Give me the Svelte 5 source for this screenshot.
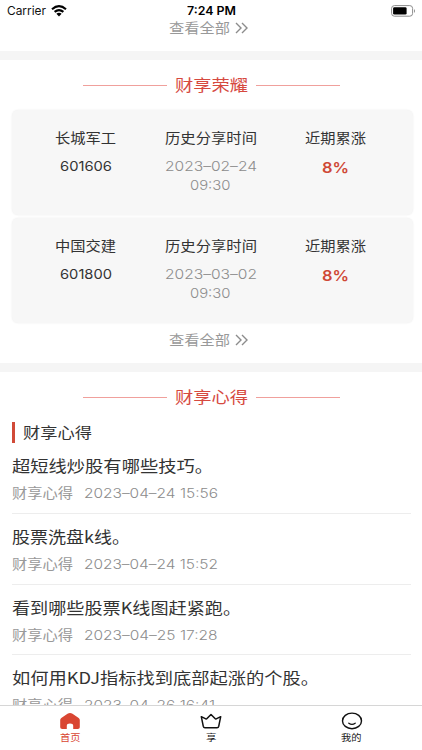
<script>
  const honours = [
    { name: '长城军工', code: '601606', date: '2023–02–24', time: '09:30', rise: '8%' },
    { name: '中国交建', code: '601800', date: '2023–03–02', time: '09:30', rise: '8%' },
  ];
  const articles = [
    { title: '超短线炒股有哪些技巧。', width: 201, time: '2023–04–24 15:56', timeWidth: 134 },
    { title: '股票洗盘k线。', width: 118, time: '2023–04–24 15:52', timeWidth: 134 },
    { title: '看到哪些股票K线图赶紧跑。', width: 229, time: '2023–04–25 17:28', timeWidth: 133.5 },
    { title: '如何用KDJ指标找到底部起涨的个股。', width: 307, time: '2023–04–26 16:41', timeWidth: 131 },
  ];

  // Extends the lettering horizontally until it fills the given width.
  function extend(node, width) {
    node.style.transform = `scaleX(${width / node.getBoundingClientRect().width})`;
  }
</script>

{#snippet wide(text, width, kind)}
  <span class="wide {kind}" style="width:{width}px"><span use:extend={width}>{text}</span></span>
{/snippet}

{#snippet more()}
  <div class="more">
    {@render wide('查看全部', 61, 'label')}
    <svg width="13" height="12" viewBox="0 0 13 12"><path d="M1 1l5 5-5 5M7 1l5 5-5 5" fill="none" stroke="#8c8c8c" stroke-width="1.4" /></svg>
  </div>
{/snippet}

{#snippet heading(text)}
  <div class="heading"><div class="rule"></div>{@render wide(text, 73, 'head')}<div class="rule"></div></div>
{/snippet}

<div class="screen">
  <header>
    <div class="carrier">
      {@render wide('Carrier', 39, 'status')}
      <svg width="16" height="12" viewBox="0 0 16 12">
        <path d="M1 4.2Q8-2 15 4.2M3.6 6.9Q8 3.2 12.4 6.9" fill="none" stroke="#000" stroke-width="2.1" />
        <path d="M5.4 8.7Q8 6.8 10.6 8.7L8 11.4Z" />
      </svg>
    </div>
    {@render wide('7:24 PM', 49, 'clock')}
    <svg class="battery" width="25" height="12" viewBox="0 0 25 12">
      <rect x=".6" y=".6" width="21" height="10.6" rx="2.8" fill="none" stroke="#8c8c8c" />
      <rect x="2.1" y="2.2" width="13.5" height="7.4" rx="1.3" />
      <path d="M23 4q2 2 0 4z" fill="#8c8c8c" />
    </svg>
  </header>

  <main>
    <section class="first">{@render more()}</section>

    <section class="honours">
      {@render heading('财享荣耀')}
      {#each honours as h}
        <div class="card">
          <div class="col">
            {@render wide(h.name, 61, 'label dark')}
            {@render wide(h.code, 52, 'num dark')}
          </div>
          <div class="col">
            {@render wide('历史分享时间', 92, 'label dark')}
            {@render wide(h.date, 92, 'num')}
            {@render wide(h.time, 40.5, 'num next')}
          </div>
          <div class="col">
            {@render wide('近期累涨', 61, 'label dark')}
            {@render wide(h.rise, 27, 'rise')}
          </div>
        </div>
      {/each}
      {@render more()}
    </section>

    <section class="notes">
      {@render heading('财享心得')}
      <div class="sub"><b></b>{@render wide('财享心得', 69, 'subhead')}</div>
      {#each articles as a}
        <article>
          <div class="title">{@render wide(a.title, a.width, 'name')}</div>
          <div class="meta">
            {@render wide('财享心得', 61, 'label')}
            {@render wide(a.time, a.timeWidth, 'date')}
          </div>
        </article>
      {/each}
    </section>
  </main>

  <nav>
    <div class="tab active">
      <svg width="22" height="18" viewBox="0 0 22 18"><path d="M2.3 6Q1.2 6.8 1.2 8v7.2q0 1.8 2 1.8h4.6v-3.3q0-2.2 3.2-2.2t3.2 2.2V17h4.6q2 0 2-1.8V8q0-1.2-1.1-2l-6.2-4.2Q11 0 8.5 1.8Z" fill="#d94632" /></svg>
      {@render wide('首页', 20.5, 'tabname')}
    </div>
    <div class="tab">
      <svg width="22" height="18" viewBox="0 0 22 18"><path d="M1.3 4.7l4.5 2.2q.7.3 1.2-.3l4-4.1 4 4.1q.5.6 1.2.3l4.5-2.2-2 9.7q-.3 1.3-1.7 1.3H5q-1.4 0-1.7-1.3Z" fill="none" stroke="#111" stroke-width="1.5" stroke-linejoin="round" /></svg>
      {@render wide('享', 10.5, 'tabname')}
    </div>
    <div class="tab">
      <svg width="22" height="18" viewBox="0 0 22 18"><ellipse cx="11" cy="8.9" rx="9.5" ry="7.8" fill="none" stroke="#111" stroke-width="1.4" /><path d="M7.8 11.2q3.2 2.3 6.4 0" fill="none" stroke="#111" stroke-width="1.3" stroke-linecap="round" /></svg>
      {@render wide('我的', 20.5, 'tabname')}
    </div>
  </nav>
</div>

<style>
  :global(body) { margin: 0; background: #fff; }
  .screen {
    width: 422px; height: 750px; overflow: hidden; display: flex; flex-direction: column;
    background: #fff; color: #999; font-family: Inter, "Noto Sans CJK SC", sans-serif;
  }
  svg { display: block; flex: none; }
  .wide { display: block; flex: none; white-space: nowrap; line-height: 20px; height: 20px; }
  .wide > span { display: inline-block; transform-origin: 0 50%; vertical-align: top; }
  .label, .head, .subhead, .name { font-family: "Noto Sans CJK SC", sans-serif; line-height: 18px; }
  .label { font-size: 13.4px; }
  .col .label { line-height: 19px; }
  .num { font-size: 13.5px; }
  .num:not(.dark), .date { font-weight: 300; color: #8c8c8c; }
  .dark { color: #333; }
  .head { font-size: 16px; color: #d6493f; }
  .status { font-size: 12px; color: #111; }
  .clock { font-size: 12px; color: #000; font-weight: 600; }
  .rise { font-size: 15px; font-weight: 600; color: #cf4835; }
  .subhead { font-size: 15px; color: #333; }
  .name { font-size: 16px; color: #333; }
  .date { font-size: 13px; }
  .tabname { font-size: 9.3px; font-family: "Noto Sans CJK SC", sans-serif; }

  header { height: 22px; flex: none; display: grid; grid-template-columns: 1fr auto 1fr; align-items: center; padding: 0 6px 0 7px; box-sizing: border-box; }
  .carrier { display: flex; align-items: center; gap: 5px; }
  .battery { justify-self: end; }
  main { height: 683px; flex: none; }
  .first { height: 29px; border-bottom: 9px solid #f5f5f5; }
  .more { display: flex; align-items: center; justify-content: center; gap: 5px; height: 34px; padding-right: 5px; }
  .first .more { height: 12px; }
  .heading { height: 50px; display: flex; align-items: center; justify-content: center; gap: 8px; }
  .rule { width: 84px; height: 1px; background: #f0a09c; }
  .honours { height: 303px; border-bottom: 9px solid #f5f5f5; }
  .card { display: flex; box-sizing: border-box; width: 401px; height: 105px; margin: 0 0 3px 12px; padding: 18px 15.5px 0 11.5px; background: #f7f7f7; border-radius: 6px; box-shadow: 0 0 2px #ececec; }
  .card + .more { margin-top: -3px; }
  .col { flex: 1; display: flex; flex-direction: column; align-items: center; }
  .col .label { margin-bottom: 8px; }
  .next { margin-top: -1px; }
  .rise { margin-top: 2px; }
  .sub { display: flex; align-items: center; height: 21px; padding-left: 12px; gap: 8px; }
  .sub b { width: 3px; height: 21px; background: #d14a38; }
  article { height: 70.8px; box-sizing: border-box; margin: 0 11px 0 12px; padding-top: 13px; border-bottom: 1px solid #ededed; }
  .title { height: 27px; }
  .meta { display: flex; gap: 11px; }
  nav { position: relative; z-index: 1; flex: none; height: 45px; box-sizing: border-box; border-top: 1px solid #d6d6d6; display: flex; background: #fff; }
  .tab { flex: 1; display: flex; flex-direction: column; align-items: center; padding-top: 6px; color: #222; }
  .tab .wide { height: 14px; line-height: 14px; }
  .active { color: #d94632; }
</style>
